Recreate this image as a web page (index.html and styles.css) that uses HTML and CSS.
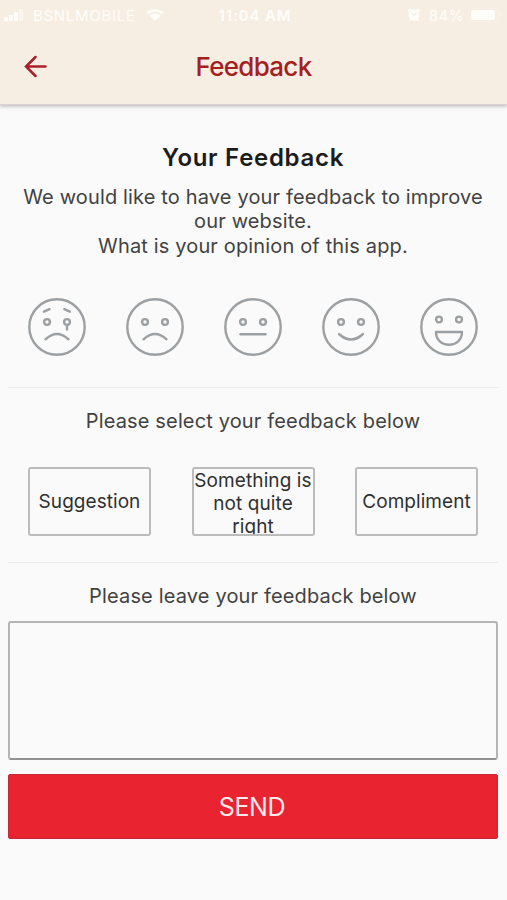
FILE: index.html
```html
<!DOCTYPE html>
<html lang="en">
<head>
<meta charset="utf-8">
<meta name="viewport" content="width=device-width, initial-scale=1">
<title>Feedback</title>
<link rel="stylesheet" href="styles.css">
</head>
<body>
<header class="top">
  <div class="status">
    <div class="status-left">
      <svg class="signal" viewBox="0 0 20 14" width="20" height="14"><rect x="0" y="9" width="4" height="4" rx="1"/><rect x="5" y="7" width="4" height="6" rx="1"/><rect x="10" y="4" width="4" height="9" rx="1"/><rect x="15" y="1" width="4" height="12" rx="1" opacity=".45"/></svg>
      <span class="carrier">BSNLMOBILE</span>
      <svg class="wifi" viewBox="0 0 20 14" width="20" height="14"><path d="M1 4Q10-2 19 4L17 6.2Q10 1.5 3 6.2ZM4.5 7.5Q10 3.5 15.5 7.5L10 13Z"/></svg>
    </div>
    <span class="clock">11:04 AM</span>
    <div class="status-right">
      <svg class="alarm" viewBox="0 0 14 14" width="14" height="14"><path d="M1 3 4 1M13 3 10 1M3 13 4 11M11 13 10 11" stroke="#fffdf9" stroke-width="2"/><circle cx="7" cy="7" r="5.5"/><path d="M5 5 7 7.5 9.5 5" fill="none" stroke="#f6eee3" stroke-width="1.2"/></svg>
      <span class="percent">84%</span>
      <svg class="battery" viewBox="0 0 34 14" width="34" height="14"><rect x=".5" y=".5" width="29" height="13" rx="3" fill="none" stroke="#fffdf9" opacity=".3"/><rect x="2" y="2" width="24" height="10" rx="2"/><path d="M31 5Q34 7 31 9Z" opacity=".5"/></svg>
    </div>
  </div>
  <div class="appbar">
    <svg class="back" viewBox="0 0 24 24" width="24" height="24"><path d="M22.5 11.5H3M12.5 2 3 11.5 12.5 21"/></svg>
    <h1 class="title">Feedback</h1>
  </div>
</header>
<main class="content">
  <h2 class="heading">Your Feedback</h2>
  <p class="intro">We would like to have your feedback to improve<br>our website.<br>What is your opinion of this app.</p>
  <div class="faces">
    <svg class="face" viewBox="0 0 58 58"><circle cx="29" cy="29" r="27.7"/><circle cx="19" cy="24" r="2.9"/><circle cx="39" cy="24" r="2.9"/><path d="M39 27V31.5M16 13.7 21.5 11.2M36.3 11.2 41.8 13.7M17.5 41.3Q29 30.7 40.5 41.3"/></svg>
    <svg class="face" viewBox="0 0 58 58"><circle cx="29" cy="29" r="27.7"/><circle cx="19" cy="24" r="2.9"/><circle cx="39" cy="24" r="2.9"/><path d="M17.5 41.3Q29 30.7 40.5 41.3"/></svg>
    <svg class="face" viewBox="0 0 58 58"><circle cx="29" cy="29" r="27.7"/><circle cx="19" cy="24" r="2.9"/><circle cx="39" cy="24" r="2.9"/><path d="M16.5 36.2H41.5"/></svg>
    <svg class="face" viewBox="0 0 58 58"><circle cx="29" cy="29" r="27.7"/><circle cx="19" cy="24" r="2.9"/><circle cx="39" cy="24" r="2.9"/><path d="M17 36Q29 47 41 36"/></svg>
    <svg class="face" viewBox="0 0 58 58"><circle cx="29" cy="29" r="27.7"/><circle cx="19" cy="21.5" r="2.9"/><circle cx="39" cy="21.5" r="2.9"/><path d="M16 34H42C42 51 16 51 16 34Z"/></svg>
  </div>
  <section class="section">
    <p class="prompt">Please select your feedback below</p>
    <div class="choices">
      <button class="choice">Suggestion</button>
      <button class="choice overflowing">Something is<br>not quite<br>right</button>
      <button class="choice">Compliment</button>
    </div>
  </section>
  <section class="section leave">
    <p class="prompt">Please leave your feedback below</p>
    <textarea class="message" aria-label="Feedback"></textarea>
    <button class="send">SEND</button>
  </section>
</main>
</body>
</html>
```
FILE: styles.css
```css
* { box-sizing: border-box; }
body {
  margin: 0;
  height: 900px;
  overflow: hidden;
  background: #fafafa;
  color: #424242;
  font-family: Inter, "Liberation Sans", sans-serif;
}
h1, h2, p { margin: 0; }
button, textarea { font: inherit; appearance: none; }
.top {
  height: 105px;
  background: #f6eee3;
  border-bottom: 1px solid #ddd1d1;
  box-shadow: 0 1px 4px rgba(60, 60, 70, .4);
}
.status {
  display: grid;
  grid-template-columns: 1fr auto 1fr;
  align-items: center;
  height: 30px;
  padding: 0 6px 0 4px;
  color: #fffdf9;
  fill: #fffdf9;
  font-size: 15px;
}
.status-left, .status-right { display: flex; align-items: center; }
.status-right { justify-content: flex-end; }
.carrier { margin: 0 9px; letter-spacing: .7px; }
.clock { margin-left: 5px; font-weight: 600; letter-spacing: .9px; }
.percent { margin: 0 5px 0 8px; letter-spacing: .5px; }
.battery { margin-right: -2px; }
.appbar {
  display: grid;
  grid-template-columns: 60px 1fr 60px;
  align-items: center;
  height: 74px;
}
.back {
  margin-left: 23px;
  fill: none;
  stroke: #a8202c;
  stroke-width: 2.5;
  stroke-linecap: round;
}
.title {
  margin-top: -2px;
  color: #a3201f;
  font-size: 26px;
  font-weight: 500;
  text-align: center;
  letter-spacing: -.7px;
}
.content { padding: 38px 9px 0 8px; text-align: center; }
.heading { color: #1c1c1c; font-size: 24px; line-height: 30px; font-weight: 600; letter-spacing: .7px; }
.intro { margin-top: 12px; font-size: 20px; line-height: 24.4px; letter-spacing: .15px; white-space: nowrap; }
.faces { display: flex; justify-content: space-between; padding: 0 20px; margin-top: 40px; }
.face { width: 58px; height: 58px; fill: none; stroke: #9da0a2; stroke-width: 2.4; stroke-linecap: round; stroke-linejoin: round; }
.section { margin-top: 31px; border-top: 1px solid #ebebeb; padding-top: 21px; }
.prompt { font-size: 20px; line-height: 25px; letter-spacing: .15px; }
.choices { display: flex; justify-content: space-between; padding: 0 20px; margin-top: 33px; }
.choice {
  display: flex;
  align-items: center;
  justify-content: center;
  width: 123px;
  height: 69px;
  padding: 0;
  overflow: hidden;
  border: 2px solid #bcbcbc;
  border-radius: 3px;
  background: #fafafa;
  color: #303030;
  font-size: 19px;
  line-height: 23px;
  letter-spacing: .05px;
  white-space: nowrap;
}
.overflowing { padding-top: 4px; letter-spacing: .1px; }
.leave { margin-top: 26px; }
.message {
  display: block;
  width: 100%;
  height: 139px;
  margin-top: 12px;
  border: 2px solid #b5b5b5;
  border-bottom-color: #929292;
  border-radius: 3px;
  background: #fafafa;
  resize: none;
}
.send {
  display: block;
  width: 100%;
  height: 65px;
  margin-top: 14px;
  padding: 0 2px 0 0;
  border: 1px solid #c92735;
  border-radius: 2px;
  background: #ea2330;
  color: #ffe9ea;
  font-size: 25px;
  letter-spacing: -.4px;
}
```
